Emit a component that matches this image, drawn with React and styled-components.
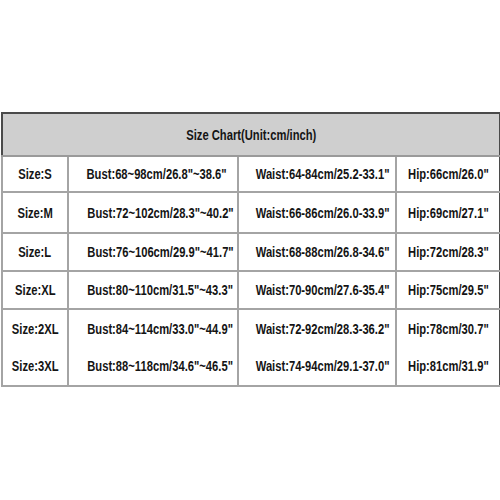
import styled, { createGlobalStyle } from "styled-components";

const GlobalStyle = createGlobalStyle`
  html, body {
    margin: 0;
    background: #ffffff;
  }
`;

const rows = [
  { size: "S", bust: "68~98cm/26.8\"~38.6\"", waist: "64-84cm/25.2-33.1\"", hip: "66cm/26.0\"", h: 36 },
  { size: "M", bust: "72~102cm/28.3\"~40.2\"", waist: "66-86cm/26.0-33.9\"", hip: "69cm/27.1\"", h: 41 },
  { size: "L", bust: "76~106cm/29.9\"~41.7\"", waist: "68-88cm/26.8-34.6\"", hip: "72cm/28.3\"", h: 38 },
  { size: "XL", bust: "80~110cm/31.5\"~43.3\"", waist: "70-90cm/27.6-35.4\"", hip: "75cm/29.5\"", h: 38 },
  { size: "2XL", bust: "84~114cm/33.0\"~44.9\"", waist: "72-92cm/28.3-36.2\"", hip: "78cm/30.7\"", h: 38, $open: true },
  { size: "3XL", bust: "88~118cm/34.6\"~46.5\"", waist: "74-94cm/29.1-37.0\"", hip: "81cm/31.9\"", h: 39 },
];

function App() {
  return (
    <Page>
      <GlobalStyle />
      <Chart>
        <colgroup>
          <col style={{ width: 66 }} />
          <col style={{ width: 170 }} />
          <col style={{ width: 158 }} />
          <col style={{ width: 104 }} />
        </colgroup>
        <tbody>
          <HeadRow>
            <HeadCell colSpan={4}>
              <Squeeze>Size Chart(Unit:cm/inch)</Squeeze>
            </HeadCell>
          </HeadRow>
          {rows.map((r) => (
            <Row key={r.size} $h={r.h} $open={r.$open}>
              <Cell><Squeeze>Size:{r.size}</Squeeze></Cell>
              <Cell><Squeeze>Bust:{r.bust}</Squeeze></Cell>
              <Cell><Squeeze>Waist:{r.waist}</Squeeze></Cell>
              <Cell><Squeeze>Hip:{r.hip}</Squeeze></Cell>
            </Row>
          ))}
        </tbody>
      </Chart>
    </Page>
  );
}

export default App;

const Page = styled.div`
  width: 500px;
  height: 500px;
  padding: 112px 0 0 1px;
  box-sizing: border-box;
  background: #fff;
`;

const Chart = styled.table`
  width: 498px;
  border-collapse: collapse;
  table-layout: fixed;
  border: 2px solid #4a4a4a;
  font-family: "Liberation Sans", Arial, sans-serif;
  font-weight: bold;
  font-size: 14px;
  color: #141414;
`;

const Squeeze = styled.span`
  display: inline-block;
  transform: scaleX(0.8);
  white-space: nowrap;
`;

const HeadRow = styled.tr`
  height: 43px;
  background: #cfcfcf;
`;

const HeadCell = styled.td`
  text-align: center;
  padding: 0;
  border-bottom: 2px solid #9a9a9a;
`;

const Row = styled.tr`
  height: ${({ $h }) => $h}px;
  border-bottom: ${({ $open }) => ($open ? "none" : "2px solid #a4a4a4")};
`;

const Cell = styled.td`
  text-align: center;
  padding: 0;
  white-space: nowrap;
  overflow: visible;
  border-left: 2px solid #a4a4a4;
`;
